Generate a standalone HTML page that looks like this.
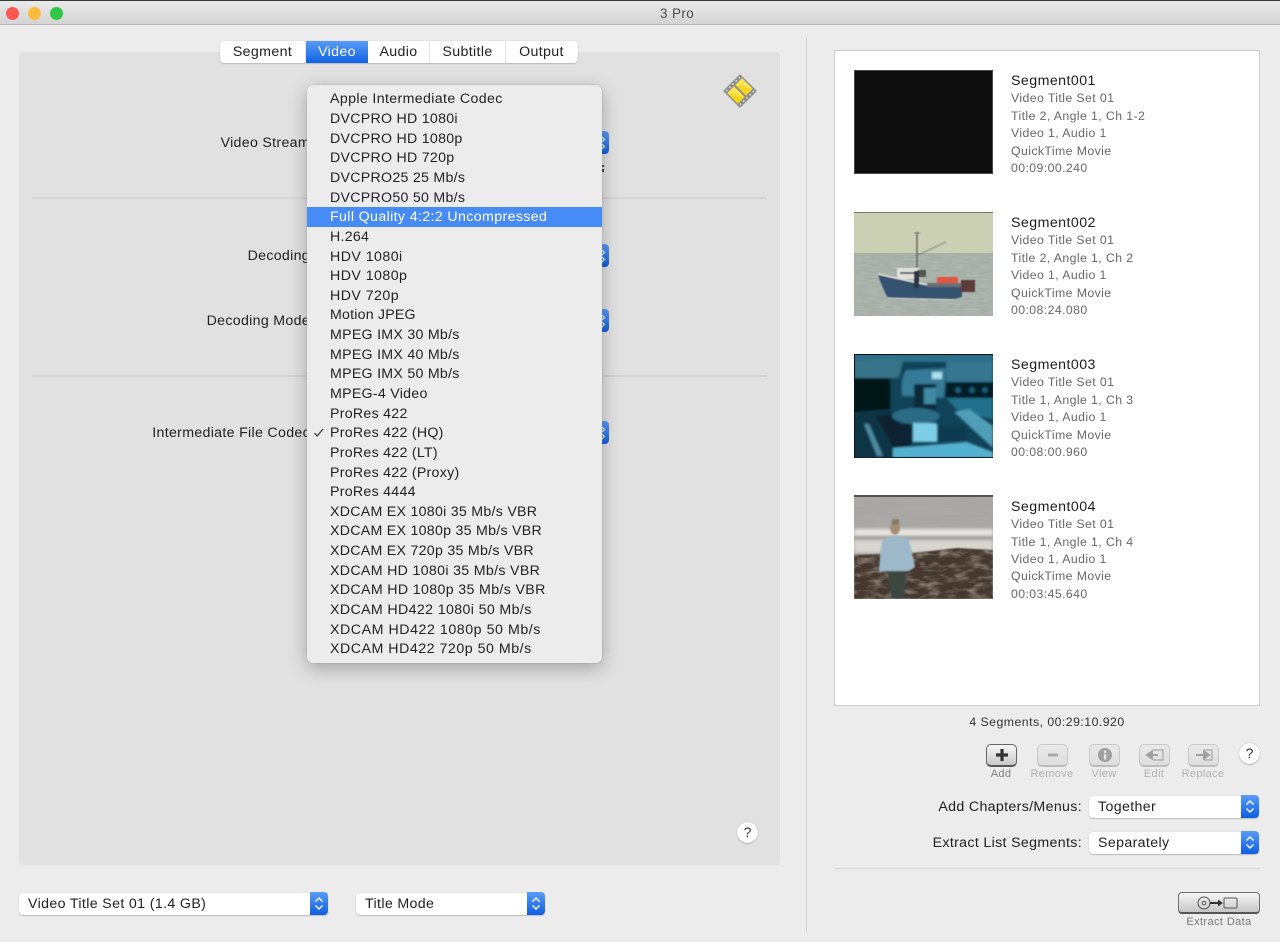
<!DOCTYPE html>
<html><head><meta charset="utf-8"><style>
html,body{margin:0;padding:0}
body{width:1280px;height:942px;overflow:hidden;position:relative;background:#ececec;font-family:"Liberation Sans",sans-serif;color:#222}
.a{position:absolute}
.t{position:absolute;white-space:nowrap;font-size:14.2px;line-height:20px;letter-spacing:.31px}
.r{text-align:right}
.tl{position:absolute;width:13px;height:13px;border-radius:50%;top:7px}
.tab{position:absolute;top:41px;height:22px;text-align:center;font-size:14.2px;line-height:22px;letter-spacing:.36px;border-right:1px solid #e4e4e4;box-sizing:border-box}
.sep{position:absolute;height:2px;background:#d4d4d4}
.m{position:absolute;left:330px;white-space:nowrap;font-size:14.2px;line-height:20px;letter-spacing:.27px;color:#222}
.sel{position:absolute;height:22px;background:#fff;border-radius:4px;box-shadow:0 1px 1px #bbb,0 0 1px #c4c4c4}
.sel span{position:absolute;left:9px;top:0;font-size:14.2px;line-height:22px;letter-spacing:.36px;white-space:nowrap}
.sel i{position:absolute;right:0;top:-1px;width:18px;height:23px;border-radius:0 4px 4px 0;background:linear-gradient(#5a9bf6,#0e5fe0)}
.sel svg{position:absolute;left:4px;top:4px}
.thumb{position:absolute;left:854px;width:139px;height:104px;overflow:hidden}
.sn{position:absolute;left:1011px;font-size:14.2px;line-height:18px;letter-spacing:.44px;color:#1c1c1c;white-space:nowrap}
.sd{position:absolute;left:1011px;font-size:12.3px;line-height:18px;letter-spacing:.4px;color:#686868;white-space:nowrap}
.ib{position:absolute;top:744px;width:31px;height:23px;box-sizing:border-box;border-radius:5px;border:1px solid #c8c8c8;border-bottom:2px solid #bcbcbc;background:linear-gradient(#e9e9e9,#dedede)}
.il{position:absolute;top:767px;width:70px;text-align:center;font-size:11px;line-height:14px;letter-spacing:.33px;color:#b0b0b0}
.q{position:absolute;width:21px;height:21px;border-radius:50%;background:#fff;box-shadow:0 0 1px #999,0 1px 1px #bbb;text-align:center;font-size:14px;line-height:21px;color:#333}
.stub{position:absolute;left:596px;width:13px;height:23px;border-radius:0 4px 4px 0;background:linear-gradient(#5a9bf6,#0e5fe0)}
</style></head><body>

<!-- title bar -->
<div class="a" style="left:0;top:0;width:1280px;height:25px;background:linear-gradient(#ececec,#d4d4d4);border-bottom:1px solid #b8b8b8;box-sizing:border-box"></div>
<div class="a" style="left:0;top:0;width:1280px;height:1px;background:#3a3a3a"></div>
<div class="tl" style="left:6px;background:#fc5753"></div>
<div class="tl" style="left:28px;background:#fdbc40"></div>
<div class="tl" style="left:49.500px;background:#33c748"></div>
<div class="t" style="left:660px;top:4px;font-size:13.500px;color:#4c4c4c;letter-spacing:.38px">3 Pro</div>

<!-- left panel -->
<div class="a" style="left:19px;top:52px;width:761px;height:813px;background:#e1e1e1;border-radius:4px"></div>
<div class="sep" style="left:32px;top:197px;width:735px"></div>
<div class="sep" style="left:32px;top:375px;width:735px"></div>

<!-- tabs -->
<div class="a" style="left:220px;top:41px;width:358px;height:22px;background:#fff;border-radius:4px;box-shadow:0 1px 1px #bbb,0 0 1px #bbb"></div>
<div class="tab" style="left:220px;width:86px">Segment</div>
<div class="tab" style="left:306px;top:41px;width:62px;height:22px;color:#fff;border:0;background:linear-gradient(#5a9bf6,#0e62e4)">Video</div>
<div class="tab" style="left:368px;width:62px">Audio</div>
<div class="tab" style="left:430px;width:76px">Subtitle</div>
<div class="tab" style="left:506px;width:71px;border:0">Output</div>

<!-- film icon -->
<svg class="a" style="left:721px;top:71.500px" width="38" height="38" viewBox="0 0 38 38">
<g transform="rotate(45 19 19)">
<rect x="7" y="7" width="24" height="24" rx="1" fill="#8f8f8f"/>
<rect x="11.500" y="8.500" width="15" height="9.500" fill="#f7d51d"/>
<rect x="11.500" y="20" width="15" height="9.500" fill="#f7d51d"/>
<path d="M11.500 8.500h15L11.500 18z" fill="#fff07a" opacity=".6"/>
<path d="M11.500 20h15L11.500 29.500z" fill="#fff07a" opacity=".6"/>
<g fill="#dcdcdc"><circle cx="9.200" cy="10" r=".9"/><circle cx="9.200" cy="14.500" r=".9"/><circle cx="9.200" cy="19" r=".9"/><circle cx="9.200" cy="23.500" r=".9"/><circle cx="9.200" cy="28" r=".9"/><circle cx="28.800" cy="10" r=".9"/><circle cx="28.800" cy="14.500" r=".9"/><circle cx="28.800" cy="19" r=".9"/><circle cx="28.800" cy="23.500" r=".9"/><circle cx="28.800" cy="28" r=".9"/></g>
</g></svg>

<!-- left labels -->
<div class="t r" style="right:970px;top:133px">Video Stream</div>
<div class="t r" style="right:970px;top:246px">Decoding</div>
<div class="t r" style="right:970px;top:311px">Decoding Mode</div>
<div class="t r" style="right:970px;top:423px">Intermediate File Codec</div>

<!-- blue stubs behind menu -->
<div class="stub" style="top:131px"></div>
<div class="stub" style="top:244px"></div>
<div class="stub" style="top:309px"></div>
<div class="stub" style="top:421px"></div>
<svg class="a" style="left:602px;top:131px" width="7" height="23" viewBox="0 0 7 23"><path d="M0 6L2.500 8.500L0 11M0 13L2.500 15.500L0 18" fill="none" stroke="#fff" stroke-width="1.200"/></svg>
<svg class="a" style="left:602px;top:244px" width="7" height="23" viewBox="0 0 7 23"><path d="M0 6L2.500 8.500L0 11M0 13L2.500 15.500L0 18" fill="none" stroke="#fff" stroke-width="1.200"/></svg>
<svg class="a" style="left:602px;top:309px" width="7" height="23" viewBox="0 0 7 23"><path d="M0 6L2.500 8.500L0 11M0 13L2.500 15.500L0 18" fill="none" stroke="#fff" stroke-width="1.200"/></svg>
<svg class="a" style="left:602px;top:421px" width="7" height="23" viewBox="0 0 7 23"><path d="M0 6L2.500 8.500L0 11M0 13L2.500 15.500L0 18" fill="none" stroke="#fff" stroke-width="1.200"/></svg>
<div class="a" style="left:602px;top:165px;width:2px;height:2px;background:#444"></div>
<div class="a" style="left:602px;top:169px;width:2px;height:3px;background:#444"></div>

<!-- menu -->
<div class="a" style="left:307px;top:85px;width:295px;height:578px;background:#ececec;border-radius:6px;box-shadow:0 0 1px #888,0 5px 18px rgba(0,0,0,.28)"></div>
<div class="a" style="left:307px;top:207px;width:295px;height:20px;background:#478bf7"></div>
<div class="m" style="top:89.400px;letter-spacing:.36px">Apple Intermediate Codec</div>
<div class="m" style="top:109.040px">DVCPRO HD 1080i</div>
<div class="m" style="top:128.680px">DVCPRO HD 1080p</div>
<div class="m" style="top:148.320px">DVCPRO HD 720p</div>
<div class="m" style="top:167.960px">DVCPRO25 25 Mb/s</div>
<div class="m" style="top:187.600px">DVCPRO50 50 Mb/s</div>
<div class="m" style="top:207.240px;color:#fff;letter-spacing:.37px">Full Quality 4:2:2 Uncompressed</div>
<div class="m" style="top:226.880px">H.264</div>
<div class="m" style="top:246.520px;letter-spacing:.45px">HDV 1080i</div>
<div class="m" style="top:266.160px;letter-spacing:.45px">HDV 1080p</div>
<div class="m" style="top:285.800px;letter-spacing:.45px">HDV 720p</div>
<div class="m" style="top:305.440px;letter-spacing:.2px">Motion JPEG</div>
<div class="m" style="top:325.080px">MPEG IMX 30 Mb/s</div>
<div class="m" style="top:344.720px">MPEG IMX 40 Mb/s</div>
<div class="m" style="top:364.360px">MPEG IMX 50 Mb/s</div>
<div class="m" style="top:384px">MPEG-4 Video</div>
<div class="m" style="top:403.640px">ProRes 422</div>
<div class="m" style="top:423.280px">ProRes 422 (HQ)</div>
<div class="m" style="top:442.920px">ProRes 422 (LT)</div>
<div class="m" style="top:462.560px">ProRes 422 (Proxy)</div>
<div class="m" style="top:482.200px">ProRes 4444</div>
<div class="m" style="top:501.840px">XDCAM EX 1080i 35 Mb/s VBR</div>
<div class="m" style="top:521.480px">XDCAM EX 1080p 35 Mb/s VBR</div>
<div class="m" style="top:541.120px">XDCAM EX 720p 35 Mb/s VBR</div>
<div class="m" style="top:560.760px;letter-spacing:.32px">XDCAM HD 1080i 35 Mb/s VBR</div>
<div class="m" style="top:580.400px;letter-spacing:.35px">XDCAM HD 1080p 35 Mb/s VBR</div>
<div class="m" style="top:600.040px;letter-spacing:.37px">XDCAM HD422 1080i 50 Mb/s</div>
<div class="m" style="top:619.680px;letter-spacing:.55px">XDCAM HD422 1080p 50 Mb/s</div>
<div class="m" style="top:639.320px;letter-spacing:.52px">XDCAM HD422 720p 50 Mb/s</div>
<svg class="a" style="left:313px;top:427px" width="12" height="11" viewBox="0 0 12 11"><path d="M1.500 6L4.200 9L10 2" fill="none" stroke="#333" stroke-width="1.200"/></svg>

<div class="q" style="left:737px;top:822px">?</div>

<!-- bottom left selects -->
<div class="sel" style="left:19px;top:893px;width:309px"><span>Video Title Set 01 (1.4 GB)</span><i><svg width="10" height="15" viewBox="0 0 10 15"><path d="M1.500 5.500L5 2L8.500 5.500M1.500 9.500L5 13L8.500 9.500" fill="none" stroke="#fff" stroke-width="1.400"/></svg></i></div>
<div class="sel" style="left:356px;top:893px;width:189px"><span>Title Mode</span><i><svg width="10" height="15" viewBox="0 0 10 15"><path d="M1.500 5.500L5 2L8.500 5.500M1.500 9.500L5 13L8.500 9.500" fill="none" stroke="#fff" stroke-width="1.400"/></svg></i></div>

<!-- vertical divider -->
<div class="a" style="left:806px;top:38px;width:1px;height:894px;background:#d4d4d4"></div>

<!-- list box -->
<div class="a" style="left:834px;top:50px;width:426px;height:656px;background:#fff;box-sizing:border-box;border:1px solid #cdcdcd"></div>

<!-- thumb 1 -->
<div class="thumb" style="top:70px;background:#0d0d0d;box-sizing:border-box;border:1px solid #4a4a4a"></div>

<!-- thumb 2 -->
<div class="thumb" style="top:212px">
<svg width="139" height="104" viewBox="0 0 139 104">
<defs>
<filter id="b1"><feGaussianBlur stdDeviation=".55"/></filter>
<filter id="n1" x="0" y="0" width="100%" height="100%"><feTurbulence type="fractalNoise" baseFrequency=".08 .5" numOctaves="2" seed="3"/><feColorMatrix values="0 0 0 0 .5  0 0 0 0 .55  0 0 0 0 .52  0 0 0 1 -.35"/></filter>
</defs>
<g transform="translate(0,-1)">
<rect y="0" width="139" height="43" fill="#cbcfb3"/>
<rect y="1" width="139" height="1" fill="#7a7a68"/>
<rect y="42" width="139" height="64" fill="#a5afa6"/>
<rect y="43" width="139" height="63" filter="url(#n1)"/>
<g filter="url(#b1)">
<path d="M24 64L42 68L75 75L108 76L108 86L100 88L34 87Q28 76 24 64z" fill="#36526f"/>
<path d="M24 63L42 67L74 74" fill="none" stroke="#e4e4dc" stroke-width="1.300"/>
<path d="M34 87L100 89" stroke="#c9d0cc" stroke-width="1" fill="none"/>
<rect x="43" y="57" width="22" height="11" fill="#dfe2da"/>
<rect x="46" y="61" width="16" height="2" fill="#666"/>
<rect x="63" y="59" width="9" height="7" fill="#555"/>
<rect x="60" y="60" width="5" height="17" fill="#2c3640"/>
<path d="M63 21V57" stroke="#5c5c58" stroke-width="1.300"/>
<path d="M60 22h6M64 44L92 31" stroke="#777" stroke-width=".9" fill="none"/>
<rect x="83" y="66" width="21" height="8" rx="2" fill="#e2553f"/>
<rect x="107" y="69" width="14" height="12" fill="#5d3a38"/>
<rect x="73" y="72" width="34" height="4" fill="#6a7176"/>
</g></g></svg></div>

<!-- thumb 3 -->
<div class="thumb" style="top:354px">
<svg width="139" height="104" viewBox="0 0 139 104">
<defs><filter id="b3"><feGaussianBlur stdDeviation="1"/></filter></defs>
<rect width="139" height="104" fill="#114358"/>
<g filter="url(#b3)">
<rect x="0" y="0" width="139" height="8" fill="#2a6f8b"/>
<path d="M0 6L50 4L45 24H0z" fill="#357389"/>
<rect x="0" y="24" width="36" height="34" fill="#051318"/>
<path d="M0 58L36 55L50 104H0z" fill="#103444"/>
<path d="M10 70L15 70L29 102L23 102z" fill="#4b8aa0"/>
<path d="M22 62L42 60L62 104L45 104z" fill="#08242f"/>
<rect x="92" y="8" width="47" height="25" fill="#357690"/>
<rect x="92" y="28" width="47" height="16" fill="#061b25"/>
<circle cx="104" cy="36" r="3" fill="#1f5c74"/><circle cx="118" cy="36" r="3" fill="#1f5c74"/><circle cx="131" cy="36" r="3" fill="#1f5c74"/>
<path d="M52 16Q46 24 48 42L90 44L92 14z" fill="#357a96"/>
<rect x="60" y="30" width="22" height="30" fill="#0a2937"/>
<rect x="70" y="34" width="12" height="16" fill="#3f8aa6"/>
<rect x="78" y="18" width="10" height="7" fill="#a8e1ef"/>
<ellipse cx="62" cy="62" rx="24" ry="8" fill="#2a6c85"/>
<path d="M92 44H139V65L105 58z" fill="#246f8c"/>
<path d="M100 58L115 55L139 72V94z" fill="#4f9db7"/>
<rect x="59" y="69" width="24" height="19" fill="#7dcfe8"/>
<rect x="45" y="70" width="14" height="20" fill="#082433"/>
<rect x="83" y="72" width="30" height="15" fill="#103b50"/>
<path d="M39 94L113 88L139 98V104H39z" fill="#52b0cf"/>
</g>
<rect x="0" y="0" width="139" height="1" fill="#111"/>
<rect x="0" y="0" width="1" height="104" fill="#111"/>
<rect x="0" y="103" width="139" height="1" fill="#123"/>
</svg></div>

<!-- thumb 4 -->
<div class="thumb" style="top:495px">
<svg width="139" height="104" viewBox="0 0 139 104">
<defs>
<filter id="b4"><feGaussianBlur stdDeviation=".7"/></filter>
<filter id="b5"><feGaussianBlur stdDeviation="1.500"/></filter>
<filter id="n2" x="0" y="0" width="100%" height="100%"><feTurbulence type="fractalNoise" baseFrequency=".07 .16" numOctaves="3" seed="7"/><feColorMatrix values="0 0 0 0 .55  0 0 0 0 .47  0 0 0 0 .4  0 0 0 1.400 -.62"/></filter>
<filter id="n3" x="0" y="0" width="100%" height="100%"><feTurbulence type="fractalNoise" baseFrequency=".02 .25" numOctaves="3" seed="5"/><feColorMatrix values="0 0 0 0 .42  0 0 0 0 .42  0 0 0 0 .42  0 0 0 1.400 -.55"/></filter>
<clipPath id="c4"><path d="M0 60L60 58L103 53L139 55V104H0z"/></clipPath>
</defs>
<rect width="139" height="104" fill="#a8a7a3"/>
<rect y="0" width="139" height="34" filter="url(#n3)"/>
<g filter="url(#b5)"><rect y="34" width="139" height="7" fill="#e6e5e0"/><rect y="41" width="139" height="3" fill="#8c8c88"/><rect y="45" width="139" height="13" fill="#d8d6d1"/></g>
<path d="M0 60L60 58L103 53L139 55V104H0z" fill="#44382e" filter="url(#b4)"/>
<g clip-path="url(#c4)"><rect y="50" width="139" height="54" filter="url(#n2)"/></g>
<rect width="139" height="2" fill="#55534f"/>
<g filter="url(#b4)">
<ellipse cx="41" cy="33" rx="5" ry="6.500" fill="#a48c74"/>
<rect x="38" y="24" width="7" height="5" fill="#6e5e4a" opacity=".6"/>
<path d="M28 46Q38 38 54 43Q58 55 61 72L55 76H33L25 77Q26 58 28 46z" fill="#9db8c8"/>
<path d="M33 76H52L50 103H38z" fill="#3e4642"/>
</g></svg></div>

<!-- list text -->
<div class="sn" style="top:72px">Segment001</div>
<div class="sd" style="top:89px">Video Title Set 01</div>
<div class="sd" style="top:107px">Title 2, Angle 1, Ch 1-2</div>
<div class="sd" style="top:124px">Video 1, Audio 1</div>
<div class="sd" style="top:142px">QuickTime Movie</div>
<div class="sd" style="top:159px">00:09:00.240</div>

<div class="sn" style="top:214px">Segment002</div>
<div class="sd" style="top:231px">Video Title Set 01</div>
<div class="sd" style="top:249px">Title 2, Angle 1, Ch 2</div>
<div class="sd" style="top:266px">Video 1, Audio 1</div>
<div class="sd" style="top:284px">QuickTime Movie</div>
<div class="sd" style="top:301px">00:08:24.080</div>

<div class="sn" style="top:356px">Segment003</div>
<div class="sd" style="top:373px">Video Title Set 01</div>
<div class="sd" style="top:391px">Title 1, Angle 1, Ch 3</div>
<div class="sd" style="top:408px">Video 1, Audio 1</div>
<div class="sd" style="top:426px">QuickTime Movie</div>
<div class="sd" style="top:443px">00:08:00.960</div>

<div class="sn" style="top:498px">Segment004</div>
<div class="sd" style="top:515px">Video Title Set 01</div>
<div class="sd" style="top:533px">Title 1, Angle 1, Ch 4</div>
<div class="sd" style="top:550px">Video 1, Audio 1</div>
<div class="sd" style="top:567px">QuickTime Movie</div>
<div class="sd" style="top:585px">00:03:45.640</div>

<div class="a" style="left:834px;top:714px;width:426px;text-align:center;font-size:12.300px;line-height:16px;letter-spacing:.46px;color:#333">4 Segments, 00:29:10.920</div>

<!-- icon buttons -->
<div class="ib" style="left:986px;border-color:#666;border-bottom-color:#555;background:linear-gradient(#f8f8f8,#c8c8c8)"><svg class="a" style="left:6px;top:1px" width="18" height="18" viewBox="0 0 18 18"><path d="M9 3v12M3 9h12" stroke="#333" stroke-width="3.200"/></svg></div>
<div class="ib" style="left:1037px"><svg class="a" style="left:6px;top:1px" width="18" height="18" viewBox="0 0 18 18"><path d="M4 9h10" stroke="#a8a8a8" stroke-width="3"/></svg></div>
<div class="ib" style="left:1089px"><svg class="a" style="left:6px;top:1px" width="18" height="18" viewBox="0 0 18 18"><circle cx="9" cy="9" r="7" fill="#a0a0a0"/><rect x="7.900" y="8" width="2.400" height="5.500" fill="#e4e4e4"/><rect x="7.900" y="4.500" width="2.400" height="2.400" fill="#e4e4e4"/></svg></div>
<div class="ib" style="left:1139px"><svg class="a" style="left:4px;top:1px" width="22" height="18" viewBox="0 0 22 18"><path d="M9 4h10v10H9" fill="none" stroke="#a8a8a8" stroke-width="1.200"/><path d="M14 9H6M8 5.500L3 9l5 3.500z" fill="#a0a0a0" stroke="#a0a0a0" stroke-width="2"/></svg></div>
<div class="ib" style="left:1188px"><svg class="a" style="left:4px;top:1px" width="22" height="18" viewBox="0 0 22 18"><path d="M11 4h8v10h-8" fill="none" stroke="#a8a8a8" stroke-width="1.200"/><path d="M3 9h9M11 5.500l5 3.500-5 3.500z" fill="#a0a0a0" stroke="#a0a0a0" stroke-width="2"/></svg></div>
<div class="il" style="left:966px;color:#7e7e7e">Add</div>
<div class="il" style="left:1017px">Remove</div>
<div class="il" style="left:1069px">View</div>
<div class="il" style="left:1119px">Edit</div>
<div class="il" style="left:1168px">Replace</div>
<div class="q" style="left:1239px;top:743px">?</div>

<div class="t r" style="right:198px;top:797px;letter-spacing:.34px">Add Chapters/Menus:</div>
<div class="t r" style="right:198px;top:833px;letter-spacing:.34px">Extract List Segments:</div>
<div class="sel" style="left:1089px;top:796px;width:170px"><span>Together</span><i><svg width="10" height="15" viewBox="0 0 10 15"><path d="M1.500 5.500L5 2L8.500 5.500M1.500 9.500L5 13L8.500 9.500" fill="none" stroke="#fff" stroke-width="1.400"/></svg></i></div>
<div class="sel" style="left:1089px;top:832px;width:170px"><span>Separately</span><i><svg width="10" height="15" viewBox="0 0 10 15"><path d="M1.500 5.500L5 2L8.500 5.500M1.500 9.500L5 13L8.500 9.500" fill="none" stroke="#fff" stroke-width="1.400"/></svg></i></div>

<div class="a" style="left:834px;top:868px;width:426px;height:1px;background:#d6d6d6"></div>

<div class="a" style="left:1178px;top:892px;width:82px;height:22px;box-sizing:border-box;border-radius:4px;border:1px solid #707070;border-bottom:2px solid #555;background:linear-gradient(#f6f6f6,#c6c6c6)">
<svg class="a" style="left:17px;top:1px" width="46" height="18" viewBox="0 0 46 18"><circle cx="8" cy="9" r="6" fill="none" stroke="#555" stroke-width="1"/><circle cx="8" cy="9" r="1.800" fill="none" stroke="#555" stroke-width="1"/><path d="M14 9h9" stroke="#333" stroke-width="2"/><path d="M22 5.500L27 9l-5 3.500z" fill="#333"/><rect x="28" y="4" width="13" height="10" rx="1" fill="none" stroke="#555" stroke-width="1"/></svg></div>
<div class="a" style="left:1178px;top:915px;width:82px;text-align:center;font-size:11px;line-height:14px;letter-spacing:.4px;color:#7a7a7a">Extract Data</div>

</body></html>
